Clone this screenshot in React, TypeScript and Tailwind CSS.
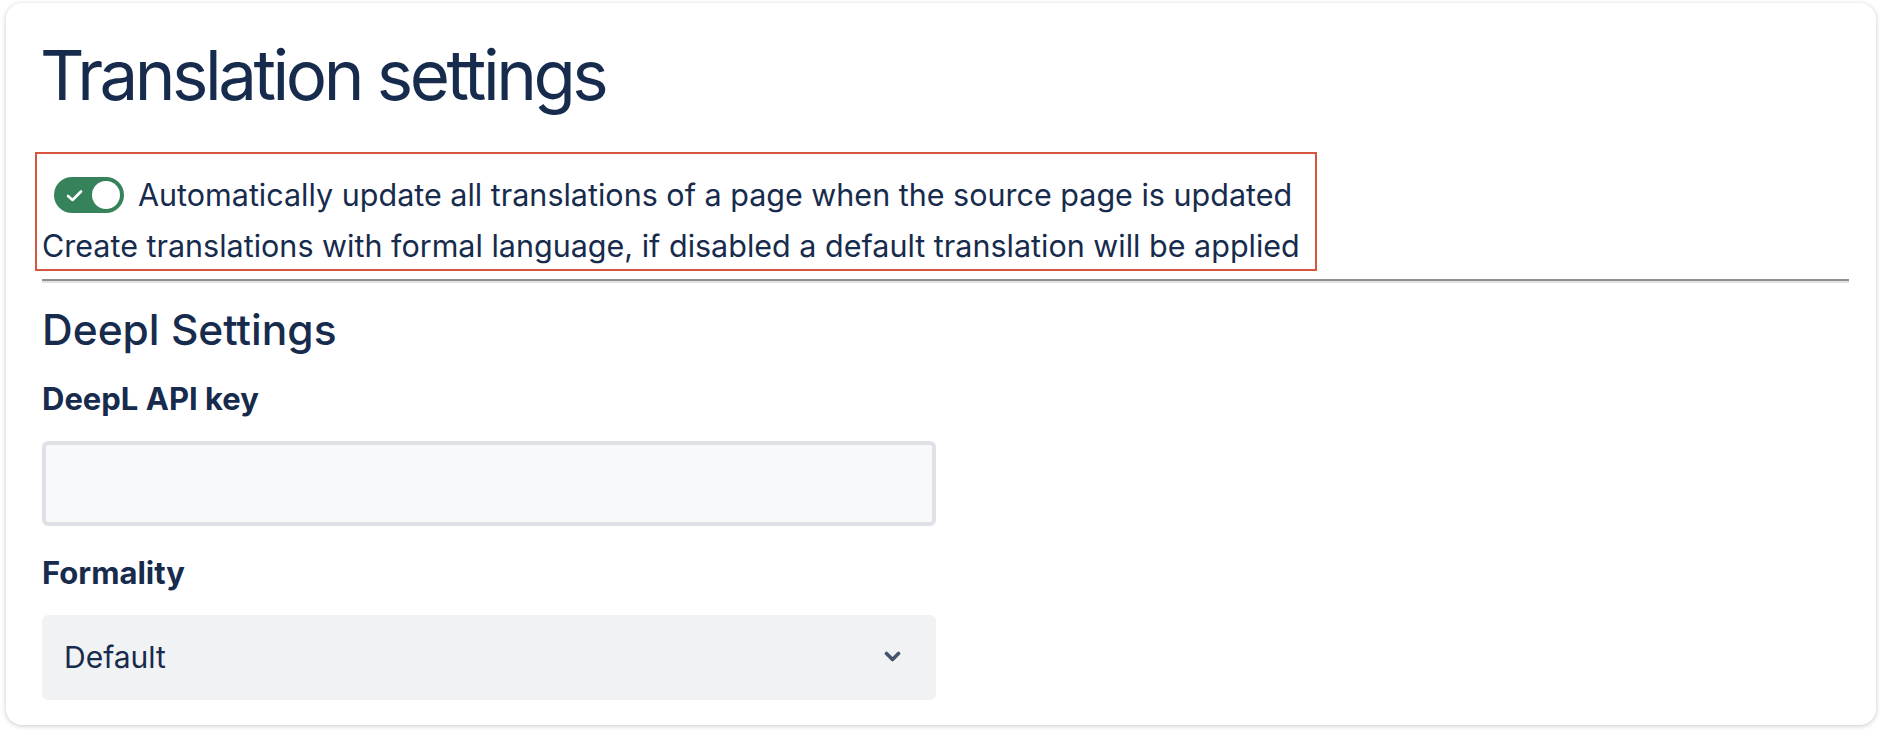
import React from 'react';

const App = () => {
  return (
    <div className="min-h-screen bg-white pt-[3px] px-[6px] font-['Inter',sans-serif] text-[#172b4d]">
      <div className="w-[1870px] h-[722px] rounded-2xl bg-white shadow-[0_1px_5px_rgba(0,0,0,0.22)] pl-9 pr-[27px] pt-[38px]">
        <h1 className="-ml-[2px] text-[69px] leading-none font-normal tracking-[-3.5px]">Translation settings</h1>

        {/* Annotated toggle block */}
        <div className="mt-[42px] -ml-[7px] w-[1282px] border-2 border-[#d6573f] pl-[5px] pt-[21px] pb-[3px]">
          <div className="flex h-[40px] items-center">
            <button className="relative ml-3 flex h-[36px] w-[70px] shrink-0 items-center rounded-full bg-[#36825a]">
              <svg className="absolute left-[12px]" width="17" height="13" viewBox="0 0 17 13" fill="none">
                <path d="M2 7 L6.5 11 L15 2.5" stroke="white" strokeWidth="2.6" strokeLinecap="round" strokeLinejoin="round" />
              </svg>
              <span className="absolute right-[4px] h-[28px] w-[28px] rounded-full bg-white" />
            </button>
            <span className="ml-[14px] text-[30.5px] leading-[40px]">
              Automatically update all translations of a page when the source page is updated
            </span>
          </div>
          <p className="mt-[11px] text-[30.5px] leading-[40px]">
            Create translations with formal language, if disabled a default translation will be applied
          </p>
        </div>

        <hr className="mt-[8px] border-t-2 border-b-2 border-t-[#8f8f8f] border-b-[#e2e2e2]" />

        <h2 className="mt-[26px] text-[42.5px] leading-none font-medium">Deepl Settings</h2>

        <label className="mt-[31px] block text-[31px] leading-none font-bold">DeepL API key</label>
        <input
          type="text"
          className="mt-[27px] block h-[85px] w-[894px] rounded-[6px] border-4 border-[#dfe1e6] bg-[#f8f9fa] px-4 outline-none"
        />

        <label className="mt-[31px] block text-[31px] leading-none font-bold">Formality</label>
        <div className="mt-[27px] flex h-[85px] w-[894px] items-center justify-between rounded-[6px] bg-[#f1f2f4] pl-[22px] pr-[35px]">
          <span className="text-[30px]">Default</span>
          <svg width="17" height="12" viewBox="0 0 17 12" fill="none">
            <path d="M2.5 2.5 L8.5 8.5 L14.5 2.5" stroke="#44546f" strokeWidth="3.6" strokeLinecap="round" strokeLinejoin="round" />
          </svg>
        </div>
      </div>
    </div>
  );
};

export default App;
